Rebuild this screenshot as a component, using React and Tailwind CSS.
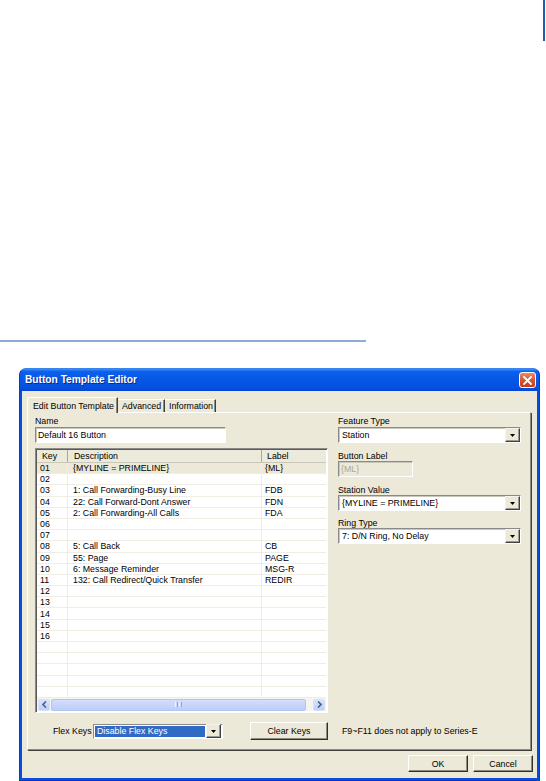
import React from 'react';

const rows = [
  ['01', '{MYLINE = PRIMELINE}', '{ML}'],
  ['02', '', ''],
  ['03', '1: Call Forwarding-Busy Line', 'FDB'],
  ['04', '22: Call Forward-Dont Answer', 'FDN'],
  ['05', '2: Call Forwarding-All Calls', 'FDA'],
  ['06', '', ''],
  ['07', '', ''],
  ['08', '5: Call Back', 'CB'],
  ['09', '55: Page', 'PAGE'],
  ['10', '6: Message Reminder', 'MSG-R'],
  ['11', '132: Call Redirect/Quick Transfer', 'REDIR'],
  ['12', '', ''],
  ['13', '', ''],
  ['14', '', ''],
  ['15', '', ''],
  ['16', '', ''],
  ['', '', ''],
  ['', '', ''],
  ['', '', ''],
  ['', '', ''],
  ['', '', ''],
];

function DropArrow() {
  return (
    <div className="w-[15px] h-[14px] shrink-0 bg-[#ece9d8] border border-t-[#f4f3ee] border-l-[#f4f3ee] border-b-[#404040] border-r-[#404040] shadow-[inset_-1px_-1px_0_#9d9a90] flex items-center justify-center">
      <svg width="5" height="3" viewBox="0 0 5 3">
        <path d="M0 0h5L2.5 3z" fill="#000" />
      </svg>
    </div>
  );
}

function Combo({ value, width }) {
  return (
    <div className={`${width} h-[16px] bg-white border border-t-[#8a8a8a] border-l-[#8a8a8a] border-b-white border-r-white shadow-[inset_1px_1px_0_#c9c6bb] flex items-center pl-[3px]`}>
      <span className="flex-1 truncate">{value}</span>
      <DropArrow />
    </div>
  );
}

function Button({ children, width }) {
  return (
    <div className={`${width} h-full bg-[#ece9d8] border border-t-white border-l-white border-b-[#303030] border-r-[#303030] shadow-[inset_-1px_-1px_0_#8e8b80] flex items-center justify-center`}>
      {children}
    </div>
  );
}

function ScrollArrow({ left }) {
  return (
    <div className="w-[12px] h-[12px] shrink-0 rounded-[2px] border border-[#d7e1f8] bg-[linear-gradient(to_bottom,#d9e4fd,#bccefa)] flex items-center justify-center">
      <svg width="5" height="7" viewBox="0 0 5 7">
        <path d={left ? 'M4 0.5L1 3.5L4 6.5' : 'M1 0.5L4 3.5L1 6.5'} fill="none" stroke="#4d6185" strokeWidth="1.6" />
      </svg>
    </div>
  );
}

function ListView() {
  return (
    <div className="mt-[5px] w-[293px] h-[265px] bg-white border border-t-[#8a8a8a] border-l-[#8a8a8a] border-b-white border-r-white shadow-[inset_1px_1px_0_#5a5a5a] p-px flex flex-col overflow-hidden">
      <div className="h-[13px] shrink-0 flex bg-[#ebeadb] border-b border-[#cbc7b8]">
        <div className="w-[31px] pl-[5px] flex items-center border-r border-[#aca899]">Key</div>
        <div className="w-[194px] pl-[6px] flex items-center border-r border-[#aca899]">Description</div>
        <div className="flex-1 pl-[5px] flex items-center">Label</div>
      </div>
      <div className="flex-1 overflow-hidden">
        {rows.map((r, i) => (
          <div key={i} className={`h-[11.2px] flex border-b border-[#efede4] ${i === 0 ? 'bg-[#ece9d8]' : ''}`}>
            <div className="w-[31px] pl-[3px] flex items-center border-r border-[#efede4]">{r[0]}</div>
            <div className="w-[194px] pl-[5px] flex items-center border-r border-[#efede4] whitespace-nowrap">{r[1]}</div>
            <div className="flex-1 pl-[3px] flex items-center">{r[2]}</div>
          </div>
        ))}
      </div>
      <div className="h-[13px] shrink-0 bg-[#f5f4ef] flex items-center px-px">
        <ScrollArrow left />
        <div className="ml-px w-[255px] h-[12px] rounded-[2px] border border-[#b3c6f2] bg-[linear-gradient(to_bottom,#d2defc,#bccdf8)] flex items-center justify-center gap-[1px]">
          <div className="w-[1px] h-[5px] bg-[#eef3fe]" />
          <div className="w-[1px] h-[5px] bg-[#8ea6e0]" />
          <div className="w-[1px] h-[5px] bg-[#eef3fe]" />
          <div className="w-[1px] h-[5px] bg-[#8ea6e0]" />
        </div>
        <div className="flex-1" />
        <ScrollArrow />
      </div>
    </div>
  );
}

function Label({ children, className = '' }) {
  return <div className={`h-[10px] leading-[10px] ${className}`}>{children}</div>;
}

export default function App() {
  return (
    <div className="w-[546px] h-[781px] bg-white overflow-hidden font-['Liberation_Sans',Arial,sans-serif] text-[8.8px] leading-[10px] text-black">
      <div className="h-[340px] flex justify-end">
        <div className="w-[2px] h-[41px] bg-[#1f5fae] mr-px" />
      </div>
      <div className="w-[366px] h-[2px] bg-[#8bacd8]" />

      <div className="mt-[26px] ml-[19px] w-[521px] h-[413px] flex flex-col rounded-t-[7px] bg-[#0a4ee0] border border-[#0b37c8] border-t-[#3a84f0]">
        <div className="h-[22px] shrink-0 rounded-t-[6px] bg-[linear-gradient(to_bottom,#3d8ff6_0%,#0b5fea_12%,#0557e6_55%,#0450df_85%,#0446d3_100%)] flex items-center pl-[5px] pr-[3px]">
          <span className="flex-1 text-white font-bold text-[10.2px] [text-shadow:1px_1px_0_#0a2a8c]">Button Template Editor</span>
          <div className="w-[17px] h-[16px] rounded-[3px] border border-white bg-[linear-gradient(to_bottom,#ec8a68,#d6532c_55%,#c23e18)] flex items-center justify-center">
            <svg width="9" height="9" viewBox="0 0 9 9">
              <path d="M1 1L8 8M8 1L1 8" stroke="#fff" strokeWidth="1.8" strokeLinecap="square" />
            </svg>
          </div>
        </div>

        <div className="flex-1 mx-[2px] mb-[2px] bg-[#ece9d8] pt-[6px] pl-[5px] flex flex-col">
          <div className="h-[15px] flex items-end">
            <div className="relative z-10 -mb-px w-[91px] h-[16px] bg-[#ece9d8] border-t border-l border-white border-r border-r-[#404040] shadow-[inset_-1px_0_0_#8e8b80] rounded-tl-[2px] flex items-center pl-[5px]">
              Edit Button Template
            </div>
            <div className="w-[47px] h-[13px] border-t border-white border-r border-r-[#404040] shadow-[inset_-1px_0_0_#8e8b80] flex items-center pl-[4px]">
              Advanced
            </div>
            <div className="w-[51px] h-[13px] border-t border-white border-r border-r-[#404040] shadow-[inset_-1px_0_0_#8e8b80] flex items-center pl-[4px]">
              Information
            </div>
          </div>

          <div className="w-[504px] h-[338px] border border-t-white border-l-white border-b-[#8e8b80] border-r-[#8e8b80] shadow-[1px_1px_0_#404040] pt-[3px] pl-[7px] flex flex-col">
            <div className="flex">
              <div className="w-[293px] flex flex-col">
                <Label>Name</Label>
                <div className="mt-px w-[191px] h-[16px] bg-white border border-t-[#8a8a8a] border-l-[#8a8a8a] border-b-white border-r-white shadow-[inset_1px_1px_0_#c9c6bb] flex items-center pl-[2px]">
                  Default 16 Button
                </div>
                <ListView />
              </div>

              <div className="ml-[10px] w-[183px] flex flex-col">
                <Label>Feature Type</Label>
                <div className="mt-px">
                  <Combo value="Station" width="w-[183px]" />
                </div>
                <Label className="mt-[8px] h-[9px]">Button Label</Label>
                <div className="w-[75px] h-[16px] bg-[#ece9d8] border border-t-[#8a8a8a] border-l-[#8a8a8a] border-b-white border-r-white shadow-[inset_1px_1px_0_#c9c6bb] flex items-center pl-[2px] text-[#aca899]">
                  {'{ML}'}
                </div>
                <Label className="mt-[8px]">Station Value</Label>
                <Combo value="{MYLINE = PRIMELINE}" width="w-[183px]" />
                <Label className="mt-[7px]">Ring Type</Label>
                <Combo value="7: D/N Ring, No Delay" width="w-[183px]" />
              </div>
            </div>

            <div className="mt-[9px] h-[18px] flex items-center">
              <span className="ml-[18px] w-[40px] whitespace-nowrap">Flex Keys</span>
              <div className="w-[130px] h-[15px] bg-white border border-t-[#8a8a8a] border-l-[#8a8a8a] border-b-white border-r-white flex items-center p-px">
                <span className="flex-1 h-full bg-[#316ac5] text-white flex items-center pl-[2px] mr-[1px] whitespace-nowrap">Disable Flex Keys</span>
                <div className="-my-px">
                  <DropArrow />
                </div>
              </div>
              <div className="ml-[27px] h-[18px]">
                <Button width="w-[78px]">Clear Keys</Button>
              </div>
              <span className="ml-[14px] whitespace-nowrap">F9~F11 does not apply to Series-E</span>
            </div>
          </div>

          <div className="mt-[5px] h-[17px] flex justify-end pr-[4px] gap-[5px]">
            <Button width="w-[60px]">OK</Button>
            <Button width="w-[60px]">Cancel</Button>
          </div>
        </div>
      </div>
    </div>
  );
}
